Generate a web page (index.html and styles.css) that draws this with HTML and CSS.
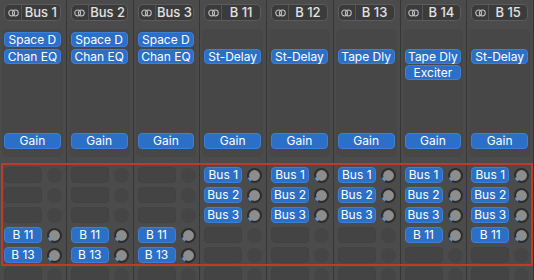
FILE: index.html
```html
<!DOCTYPE html>
<html lang="en">
<head>
    <meta charset="UTF-8">
    <title>Mixer - Sends</title>
    <link rel="stylesheet" href="styles.css">
</head>
<body>
    <!-- shared shapes -->
    <svg class="defs" width="0" height="0">
        <symbol id="link" viewBox="0 0 12 8">
            <circle cx="4" cy="4" r="3.2" fill="none" stroke="currentColor" stroke-width="1.1"/>
            <circle cx="8" cy="4" r="3.2" fill="none" stroke="currentColor" stroke-width="1.1"/>
        </symbol>
        <symbol id="knob" viewBox="0 0 15 15">
            <circle cx="7.5" cy="7.5" r="7.5" fill="#2d2d2d"/>
            <circle cx="7.5" cy="7.5" r="5.4" fill="#8d8d8d"/>
            <path d="M3.6 12.1 A6.2 6.2 0 0 1 2.1 10.4" fill="none" stroke="#5a9be6" stroke-width="2" stroke-linecap="round"/>
        </symbol>
    </svg>

    <div class="mixer">
        <!-- Bus 1 -->
        <div class="strip">
            <div class="io"><span class="link"><svg><use href="#link"/></svg></span><span class="name">Bus 1</span></div>
            <div class="inserts">
                <div class="slot plugin">Space D</div>
                <div class="slot plugin">Chan EQ</div>
                <div class="gain">Gain</div>
            </div>
            <div class="sends">
                <div class="send"><span class="send-btn empty"></span><span class="knob empty"></span></div>
                <div class="send"><span class="send-btn empty"></span><span class="knob empty"></span></div>
                <div class="send"><span class="send-btn empty"></span><span class="knob empty"></span></div>
                <div class="send"><span class="send-btn">B 11</span><svg class="knob"><use href="#knob"/></svg></div>
                <div class="send"><span class="send-btn">B 13</span><svg class="knob"><use href="#knob"/></svg></div>
                <div class="send"><span class="send-btn empty"></span><span class="knob empty"></span></div>
            </div>
        </div>

        <!-- Bus 2 -->
        <div class="strip">
            <div class="io"><span class="link"><svg><use href="#link"/></svg></span><span class="name">Bus 2</span></div>
            <div class="inserts">
                <div class="slot plugin">Space D</div>
                <div class="slot plugin">Chan EQ</div>
                <div class="gain">Gain</div>
            </div>
            <div class="sends">
                <div class="send"><span class="send-btn empty"></span><span class="knob empty"></span></div>
                <div class="send"><span class="send-btn empty"></span><span class="knob empty"></span></div>
                <div class="send"><span class="send-btn empty"></span><span class="knob empty"></span></div>
                <div class="send"><span class="send-btn">B 11</span><svg class="knob"><use href="#knob"/></svg></div>
                <div class="send"><span class="send-btn">B 13</span><svg class="knob"><use href="#knob"/></svg></div>
                <div class="send"><span class="send-btn empty"></span><span class="knob empty"></span></div>
            </div>
        </div>

        <!-- Bus 3 -->
        <div class="strip">
            <div class="io"><span class="link"><svg><use href="#link"/></svg></span><span class="name">Bus 3</span></div>
            <div class="inserts">
                <div class="slot plugin">Space D</div>
                <div class="slot plugin">Chan EQ</div>
                <div class="gain">Gain</div>
            </div>
            <div class="sends">
                <div class="send"><span class="send-btn empty"></span><span class="knob empty"></span></div>
                <div class="send"><span class="send-btn empty"></span><span class="knob empty"></span></div>
                <div class="send"><span class="send-btn empty"></span><span class="knob empty"></span></div>
                <div class="send"><span class="send-btn">B 11</span><svg class="knob"><use href="#knob"/></svg></div>
                <div class="send"><span class="send-btn">B 13</span><svg class="knob"><use href="#knob"/></svg></div>
                <div class="send"><span class="send-btn empty"></span><span class="knob empty"></span></div>
            </div>
        </div>

        <!-- B 11 -->
        <div class="strip">
            <div class="io"><span class="link"><svg><use href="#link"/></svg></span><span class="name">B 11</span></div>
            <div class="inserts">
                <div class="slot"></div>
                <div class="slot plugin">St-Delay</div>
                <div class="gain">Gain</div>
            </div>
            <div class="sends">
                <div class="send"><span class="send-btn">Bus 1</span><svg class="knob"><use href="#knob"/></svg></div>
                <div class="send"><span class="send-btn">Bus 2</span><svg class="knob"><use href="#knob"/></svg></div>
                <div class="send"><span class="send-btn">Bus 3</span><svg class="knob"><use href="#knob"/></svg></div>
                <div class="send"><span class="send-btn empty"></span><span class="knob empty"></span></div>
                <div class="send"><span class="send-btn empty"></span><span class="knob empty"></span></div>
                <div class="send"><span class="send-btn empty"></span><span class="knob empty"></span></div>
            </div>
        </div>

        <!-- B 12 -->
        <div class="strip">
            <div class="io"><span class="link"><svg><use href="#link"/></svg></span><span class="name">B 12</span></div>
            <div class="inserts">
                <div class="slot"></div>
                <div class="slot plugin">St-Delay</div>
                <div class="gain">Gain</div>
            </div>
            <div class="sends">
                <div class="send"><span class="send-btn">Bus 1</span><svg class="knob"><use href="#knob"/></svg></div>
                <div class="send"><span class="send-btn">Bus 2</span><svg class="knob"><use href="#knob"/></svg></div>
                <div class="send"><span class="send-btn">Bus 3</span><svg class="knob"><use href="#knob"/></svg></div>
                <div class="send"><span class="send-btn empty"></span><span class="knob empty"></span></div>
                <div class="send"><span class="send-btn empty"></span><span class="knob empty"></span></div>
                <div class="send"><span class="send-btn empty"></span><span class="knob empty"></span></div>
            </div>
        </div>

        <!-- B 13 -->
        <div class="strip">
            <div class="io"><span class="link"><svg><use href="#link"/></svg></span><span class="name">B 13</span></div>
            <div class="inserts">
                <div class="slot"></div>
                <div class="slot plugin">Tape Dly</div>
                <div class="gain">Gain</div>
            </div>
            <div class="sends">
                <div class="send"><span class="send-btn">Bus 1</span><svg class="knob"><use href="#knob"/></svg></div>
                <div class="send"><span class="send-btn">Bus 2</span><svg class="knob"><use href="#knob"/></svg></div>
                <div class="send"><span class="send-btn">Bus 3</span><svg class="knob"><use href="#knob"/></svg></div>
                <div class="send"><span class="send-btn empty"></span><span class="knob empty"></span></div>
                <div class="send"><span class="send-btn empty"></span><span class="knob empty"></span></div>
                <div class="send"><span class="send-btn empty"></span><span class="knob empty"></span></div>
            </div>
        </div>

        <!-- B 14 -->
        <div class="strip">
            <div class="io"><span class="link"><svg><use href="#link"/></svg></span><span class="name">B 14</span></div>
            <div class="inserts">
                <div class="slot"></div>
                <div class="slot plugin">Tape Dly</div>
                <div class="slot plugin">Exciter</div>
                <div class="gain">Gain</div>
            </div>
            <div class="sends">
                <div class="send"><span class="send-btn">Bus 1</span><svg class="knob"><use href="#knob"/></svg></div>
                <div class="send"><span class="send-btn">Bus 2</span><svg class="knob"><use href="#knob"/></svg></div>
                <div class="send"><span class="send-btn">Bus 3</span><svg class="knob"><use href="#knob"/></svg></div>
                <div class="send"><span class="send-btn">B 11</span><svg class="knob"><use href="#knob"/></svg></div>
                <div class="send"><span class="send-btn empty"></span><span class="knob empty"></span></div>
                <div class="send"><span class="send-btn empty"></span><span class="knob empty"></span></div>
            </div>
        </div>

        <!-- B 15 -->
        <div class="strip">
            <div class="io"><span class="link"><svg><use href="#link"/></svg></span><span class="name">B 15</span></div>
            <div class="inserts">
                <div class="slot"></div>
                <div class="slot plugin">St-Delay</div>
                <div class="gain">Gain</div>
            </div>
            <div class="sends">
                <div class="send"><span class="send-btn">Bus 1</span><svg class="knob"><use href="#knob"/></svg></div>
                <div class="send"><span class="send-btn">Bus 2</span><svg class="knob"><use href="#knob"/></svg></div>
                <div class="send"><span class="send-btn">Bus 3</span><svg class="knob"><use href="#knob"/></svg></div>
                <div class="send"><span class="send-btn">B 11</span><svg class="knob"><use href="#knob"/></svg></div>
                <div class="send"><span class="send-btn empty"></span><span class="knob empty"></span></div>
                <div class="send"><span class="send-btn empty"></span><span class="knob empty"></span></div>
            </div>
        </div>

        <!-- highlight around the sends section -->
        <div class="highlight"></div>
    </div>
</body>
</html>
```

FILE: styles.css
```css
/* Reset */
* {
    box-sizing: border-box;
    margin: 0;
    padding: 0;
}

body {
    font-family: 'Inter', 'Noto Sans', sans-serif;
    background-color: #4a4a4a;
    width: 534px;
    height: 280px;
    overflow: hidden;
}

.defs {
    position: absolute;
}

/* Mixer: eight channel strips */
.mixer {
    position: relative;
    display: grid;
    grid-template-columns: repeat(8, 1fr);
    height: 280px;
}

.strip {
    padding: 4px 3px 0 2px;
    border-right: 1px solid #363636;
    background-color: #4b4b4b;
}

/* Output / IO header */
.io {
    display: flex;
    height: 17px;
    margin: 0 2px;
    background-color: #3b3b3b;
    border: 1px solid #5c5c5c;
    border-radius: 5px;
    color: #e2e2e2;
    font-size: 13px;
    font-weight: 500;
    line-height: 15px;
}

.link {
    width: 17px;
    display: flex;
    align-items: center;
    justify-content: center;
    border-right: 1px solid #555555;
    color: #c4c4c4;
}

.link svg {
    width: 11px;
    height: 8px;
}

.name {
    flex: 1;
    text-align: center;
}

/* Insert slots */
.inserts {
    display: flex;
    flex-direction: column;
    gap: 1.5px;
    height: 128px;
    margin-top: 8px;
    padding: 3px 2px 8px;
    background-color: #474747;
    border-radius: 5px;
}

.slot {
    height: 15px;
    border-radius: 4px;
}

.plugin,
.gain,
.send-btn {
    background-color: #2c6fc7;
    border: 1px solid #3e80d4;
    color: #ffffff;
    font-size: 12px;
    text-align: center;
    border-radius: 4px;
}

.plugin {
    line-height: 13px;
}

.gain {
    height: 16px;
    line-height: 14px;
    margin-top: auto;
}

/* Sends */
.sends {
    display: flex;
    flex-direction: column;
    gap: 4px;
    margin-top: 10px;
    padding-left: 2px;
}

.send {
    display: flex;
    align-items: center;
    gap: 5px;
    height: 16px;
}

.send-btn {
    width: 38px;
    height: 16px;
    line-height: 14px;
}

.send-btn.empty {
    background-color: #444444;
    border-color: #424242;
}

.knob {
    width: 15px;
    height: 15px;
    flex-shrink: 0;
}

.knob.empty {
    border-radius: 50%;
    background-color: #454545;
}

/* Red outline around the send section */
.highlight {
    position: absolute;
    top: 163px;
    left: 1px;
    width: 532px;
    height: 103px;
    border: 2px solid #bd3a2e;
    pointer-events: none;
}
```
